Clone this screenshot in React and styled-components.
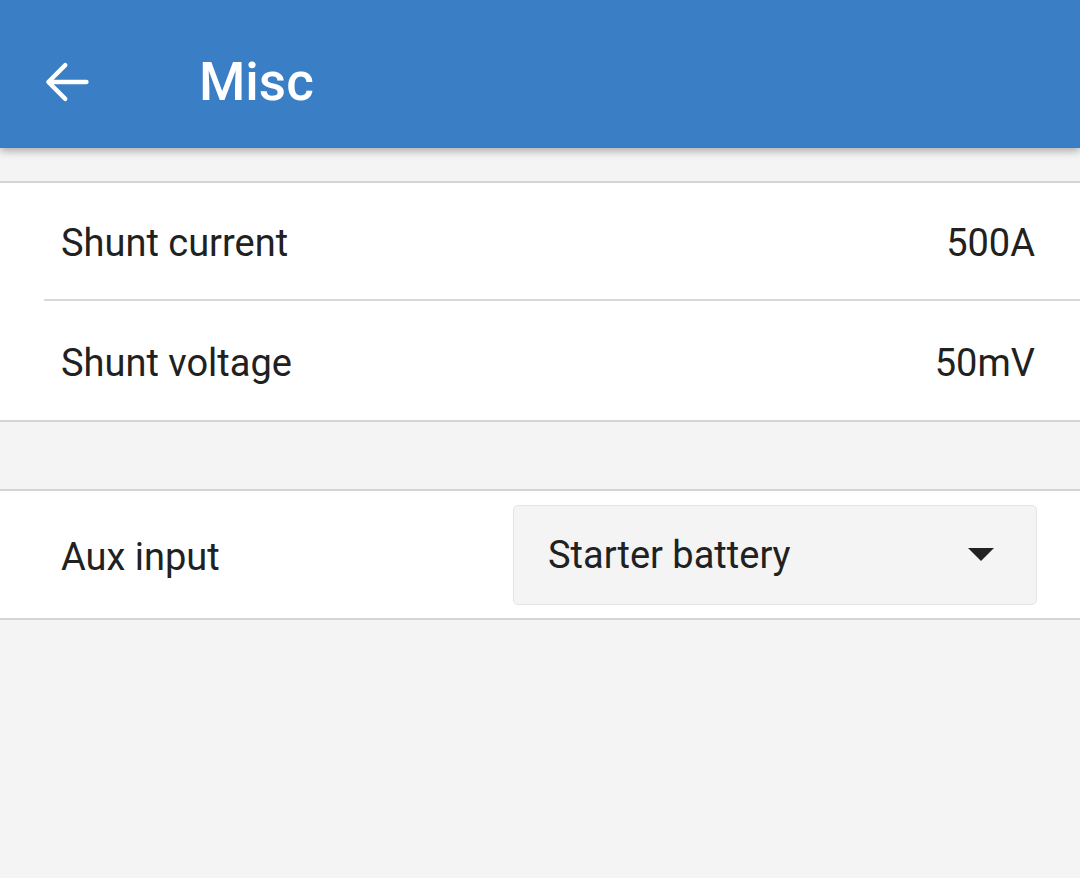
import styled, { createGlobalStyle } from "styled-components";

const GlobalStyle = createGlobalStyle`
  html, body {
    margin: 0;
    padding: 0;
    background: #f4f4f4;
    font-family: Roboto, "Liberation Sans", sans-serif;
  }
`;

const Page = styled.div`
  width: 1080px;
  height: 878px;
  background: #f4f4f4;
  overflow: hidden;
`;

const Header = styled.header`
  position: relative;
  z-index: 1;
  height: 148px;
  box-sizing: border-box;
  padding-top: 16px;
  display: flex;
  align-items: center;
  background: #3a7ec5;
  box-shadow: 0 3px 8px rgba(0, 0, 0, 0.3);
`;

const BackButton = styled.button`
  width: 132px;
  height: 100%;
  padding: 0 0 0 41px;
  display: flex;
  align-items: center;
  background: none;
  border: none;
  color: #fff;
`;

const Title = styled.h1`
  margin: 0 0 0 67px;
  font-size: 53px;
  font-weight: 500;
  color: #fff;
`;

const Section = styled.section`
  margin-top: ${(p) => p.$gap}px;
  background: #fff;
  border-top: 2px solid #d4d4d4;
  border-bottom: 2px solid #d4d4d4;
`;

const Row = styled.div`
  height: ${(p) => p.$height}px;
  margin-left: 44px;
  padding: 4px 45px 0 17px;
  box-sizing: border-box;
  display: flex;
  align-items: center;
  justify-content: space-between;
  border-top: ${(p) => (p.$divider ? "2px solid #d9d9d9" : "none")};
`;

const Label = styled.span`
  font-size: 38px;
  color: #212121;
`;

const Value = styled.span`
  font-size: 38px;
  color: #212121;
`;

const Select = styled.div`
  width: 524px;
  height: 100px;
  box-sizing: border-box;
  margin: -4px -2px 0 0;
  padding: 0 42px 0 34px;
  display: flex;
  align-items: center;
  justify-content: space-between;
  background: #f4f4f4;
  border: 1px solid #e4e4e4;
  border-radius: 5px;
  font-size: 38px;
  color: #212121;
`;

const Caret = styled.span`
  width: 0;
  height: 0;
  border-left: 13px solid transparent;
  border-right: 13px solid transparent;
  border-top: 13px solid #222;
`;

const App = () => (
  <Page>
    <GlobalStyle />
    <Header>
      <BackButton aria-label="Back">
        <svg width="52" height="52" viewBox="0 0 24 24" fill="none">
          <path
            d="M21 12H3.6M11.2 4.2L3.4 12l7.8 7.8"
            stroke="#fff"
            strokeWidth="2"
            strokeLinecap="round"
            strokeLinejoin="round"
          />
        </svg>
      </BackButton>
      <Title>Misc</Title>
    </Header>

    <Section $gap={33}>
      <Row $height={116}>
        <Label>Shunt current</Label>
        <Value>500A</Value>
      </Row>
      <Row $height={121} $divider>
        <Label>Shunt voltage</Label>
        <Value>50mV</Value>
      </Row>
    </Section>

    <Section $gap={67}>
      <Row $height={127}>
        <Label>Aux input</Label>
        <Select>
          <span>Starter battery</span>
          <Caret />
        </Select>
      </Row>
    </Section>
  </Page>
);

export default App;
